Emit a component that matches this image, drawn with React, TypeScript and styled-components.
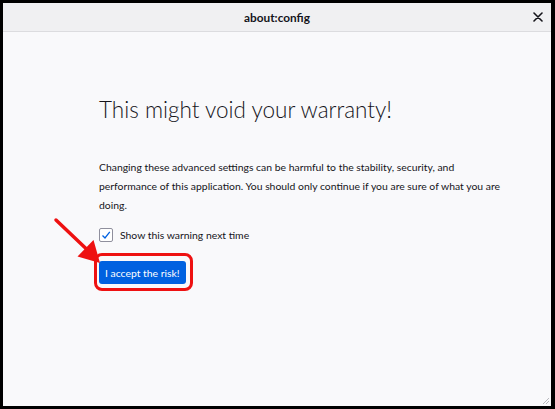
import React from 'react';
import styled, { createGlobalStyle } from 'styled-components';

const GlobalStyle = createGlobalStyle`
  html, body {
    margin: 0;
    padding: 0;
    background: #000;
  }
  body {
    font-family: Lato, 'Open Sans', sans-serif;
  }
`;

const App = () => {
  return (
    <>
      <GlobalStyle />
      <Frame>
        <TitleBar>
          <TitleText>about:config</TitleText>
          <CloseButton aria-label='Close'>
            <svg width='10' height='10' viewBox='0 0 10 10'>
              <path d='M1 1 L9 9 M9 1 L1 9' stroke='#15141a' strokeWidth='1.6' strokeLinecap='round' />
            </svg>
          </CloseButton>
        </TitleBar>

        <Content>
          <Heading>This might void your warranty!</Heading>
          <Description>
            Changing these advanced settings can be harmful to the stability, security, and
            performance of this application. You should only continue if you are sure of what
            you are doing.
          </Description>

          <CheckRow>
            <CheckBox>
              <svg width='10' height='10' viewBox='0 0 10 10'>
                <path d='M1.5 5.5 L4 8 L8.8 1.8' fill='none' stroke='#0061e0' strokeWidth='1.3' />
              </svg>
            </CheckBox>
            <CheckLabel>Show this warning next time</CheckLabel>
          </CheckRow>

          <ActionArea>
            {/* annotation arrow pointing at the button */}
            <Arrow width='56' height='52' viewBox='0 0 56 52'>
              <path d='M6 6 L37 35.5' stroke='#ee1111' strokeWidth='3.5' strokeLinecap='round' />
              <polygon points='27.5,42.5 50,49 43.5,26' fill='#ee1111' />
            </Arrow>
            <Highlight>
              <AcceptButton>I accept the risk!</AcceptButton>
            </Highlight>
          </ActionArea>
        </Content>

        <Grip width='8' height='8' viewBox='0 0 8 8'>
          <path d='M7 1 L1 7 M7 4 L4 7' stroke='#b8b8bd' strokeWidth='1' />
        </Grip>
      </Frame>
    </>
  );
};

export default App;

const Frame = styled.div`
  position: relative;
  box-sizing: border-box;
  width: 555px;
  height: 409px;
  border: 3px solid #000;
  border-right-width: 4px;
  background: #f9f9fb;
  display: flex;
  flex-direction: column;
  overflow: hidden;
`;

const TitleBar = styled.div`
  position: relative;
  height: 28px;
  flex-shrink: 0;
  background: #f0f0f2;
  border-bottom: 1px solid #dcdcdf;
  display: flex;
  align-items: center;
  justify-content: center;
`;

const TitleText = styled.div`
  font-size: 11.8px;
  font-weight: 700;
  color: #15141a;
`;

const CloseButton = styled.div`
  position: absolute;
  right: 8px;
  top: 9px;
  width: 10px;
  height: 10px;
  display: flex;
`;

const Content = styled.div`
  padding: 62px 0 0 96px;
  color: #15141a;
`;

const Heading = styled.h1`
  margin: 0;
  font-size: 22.5px;
  font-weight: 300;
  line-height: 32px;
`;

const Description = styled.p`
  margin: 32px 0 0;
  width: 415px;
  font-size: 10.4px;
  line-height: 19px;
`;

const CheckRow = styled.div`
  margin-top: 13px;
  display: flex;
  align-items: center;
  gap: 7px;
`;

const CheckBox = styled.div`
  box-sizing: border-box;
  width: 14px;
  height: 14px;
  border: 1px solid #8f8f9d;
  border-radius: 2px;
  background: #fff;
  display: flex;
  align-items: center;
  justify-content: center;
`;

const CheckLabel = styled.span`
  font-size: 10.4px;
`;

const ActionArea = styled.div`
  position: relative;
  margin-top: 11px;
`;

const Arrow = styled.svg`
  position: absolute;
  left: -49px;
  top: -39px;
  z-index: 1;
`;

const Highlight = styled.div`
  display: inline-flex;
  margin-left: -5px;
  padding: 5px 4px 4px 2px;
  border: 3px solid #ee1111;
  border-radius: 8px;
`;

const AcceptButton = styled.button`
  height: 23px;
  padding: 0 6px;
  border: none;
  border-radius: 3px;
  background: #0061e0;
  color: #fff;
  font-family: Lato, 'Open Sans', sans-serif;
  font-size: 10.4px;
`;

const Grip = styled.svg`
  position: absolute;
  right: 1px;
  bottom: 1px;
`;
